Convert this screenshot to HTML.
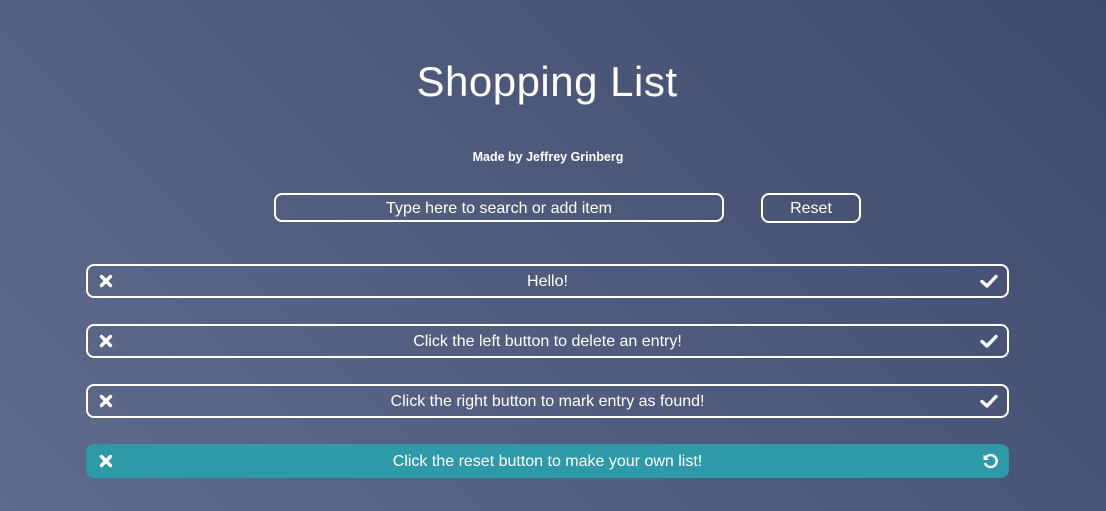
<!DOCTYPE html>
<html><head><style>
body{margin:0;width:1106px;height:511px;overflow:hidden;font-family:"Liberation Sans",sans-serif;color:#fff;
background:linear-gradient(225deg,#3f4b6c 0%,#4f5b7b 50%,#5f6b8a 100%);position:relative}
h1{position:absolute;top:58px;left:-6px;width:1106px;text-align:center;margin:0;font-weight:normal;font-size:42px;letter-spacing:0.5px;font-family:"Liberation Sans",sans-serif}
.sub{position:absolute;top:150px;left:-5px;width:1106px;text-align:center;font-size:12.5px;font-weight:bold}
.box{position:absolute;box-sizing:border-box;border:2px solid #fff;border-radius:8px;text-align:center;font-size:16px}
.row{position:absolute;left:86px;width:923px;height:34px;box-sizing:border-box;border:2px solid #fff;border-radius:8px;text-align:center;line-height:32px;font-size:16px}
.row svg{position:absolute;top:8px}
.x{left:11px}.c{right:9px}
</style></head><body>
<h1>Shopping List</h1>
<div class="sub">Made by Jeffrey Grinberg</div>
<div class="box" style="left:274px;top:193px;width:450px;height:29px;line-height:27px">Type here to search or add item</div>
<div class="box" style="left:761px;top:193px;width:100px;height:30px;line-height:28px">Reset</div>
<div class="row" style="top:264px">Hello!<svg class="x" width="14" height="14" viewBox="0 0 14 14"><path d="M2.5 2.5L11.5 11.5M11.5 2.5L2.5 11.5" stroke="#fff" stroke-width="3.4" stroke-linecap="round"/></svg><svg class="c" width="18" height="14" viewBox="0 0 18 14"><path d="M2 7.5L7 12L16 2.5" fill="none" stroke="#fff" stroke-width="3.4" stroke-linecap="round" stroke-linejoin="round"/></svg></div>
<div class="row" style="top:324px">Click the left button to delete an entry!<svg class="x" width="14" height="14" viewBox="0 0 14 14"><path d="M2.5 2.5L11.5 11.5M11.5 2.5L2.5 11.5" stroke="#fff" stroke-width="3.4" stroke-linecap="round"/></svg><svg class="c" width="18" height="14" viewBox="0 0 18 14"><path d="M2 7.5L7 12L16 2.5" fill="none" stroke="#fff" stroke-width="3.4" stroke-linecap="round" stroke-linejoin="round"/></svg></div>
<div class="row" style="top:384px">Click the right button to mark entry as found!<svg class="x" width="14" height="14" viewBox="0 0 14 14"><path d="M2.5 2.5L11.5 11.5M11.5 2.5L2.5 11.5" stroke="#fff" stroke-width="3.4" stroke-linecap="round"/></svg><svg class="c" width="18" height="14" viewBox="0 0 18 14"><path d="M2 7.5L7 12L16 2.5" fill="none" stroke="#fff" stroke-width="3.4" stroke-linecap="round" stroke-linejoin="round"/></svg></div>
<div class="row" style="top:444px;background:#2e9aa7;border-color:#2e9aa7">Click the reset button to make your own list!<svg class="x" width="14" height="14" viewBox="0 0 14 14"><path d="M2.5 2.5L11.5 11.5M11.5 2.5L2.5 11.5" stroke="#fff" stroke-width="3.4" stroke-linecap="round"/></svg><svg class="c" width="16" height="16" viewBox="0 0 16 16" style="top:7px"><path d="M3.5 5A6 6 0 1 1 3 10" fill="none" stroke="#fff" stroke-width="2.4"/><path d="M1.5 1.5L1.5 7L7 7Z" fill="#fff"/></svg></div>
</body></html>
